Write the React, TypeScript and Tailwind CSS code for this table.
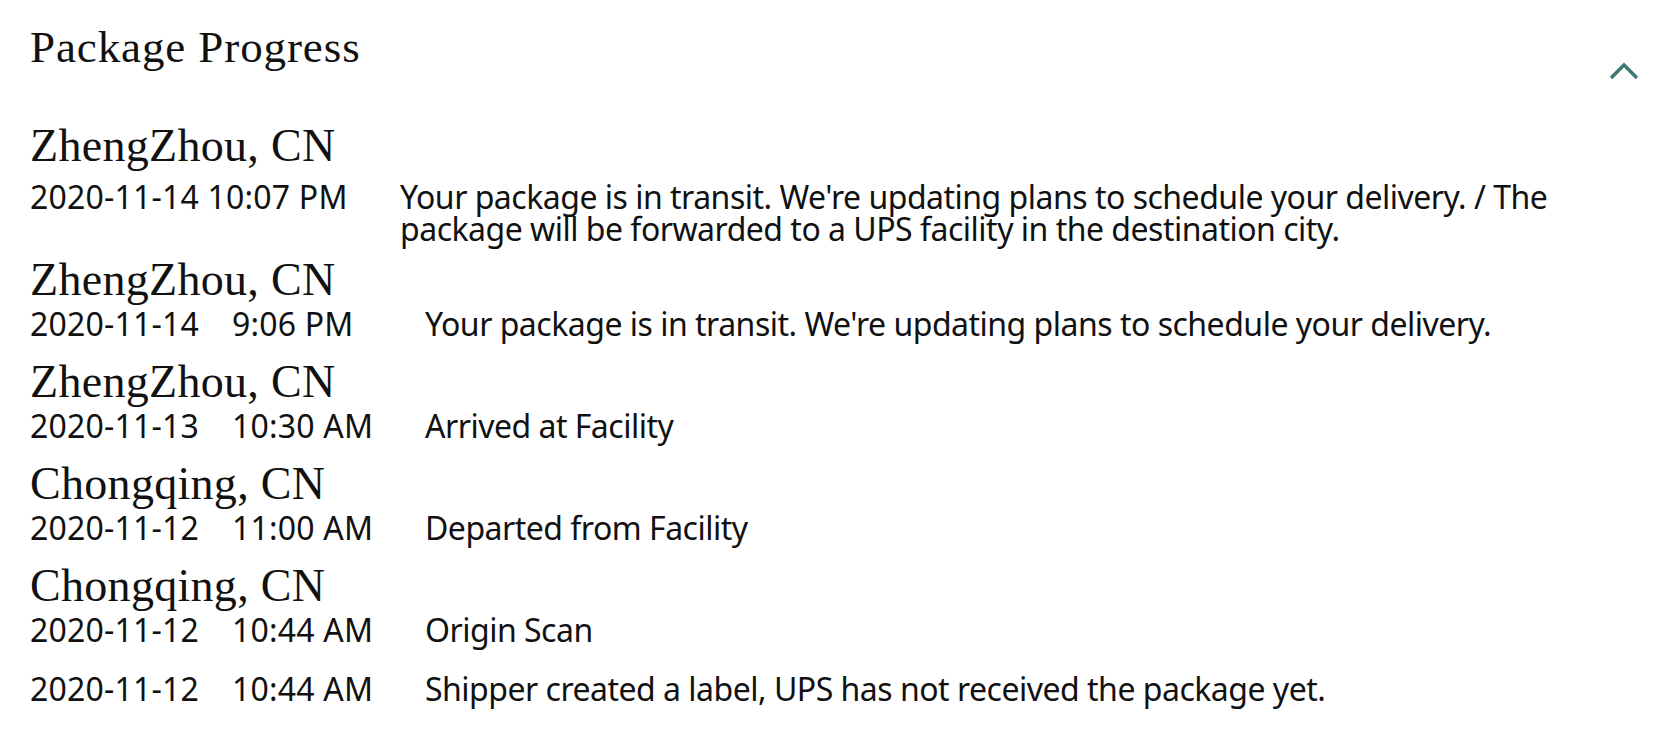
import React from "react";

type Row = { date: string; time: string; desc: string };
type Block = { city?: string; rows: Row[] };

const blocks: Block[] = [
  {
    city: "ZhengZhou, CN",
    rows: [
      { date: "2020-11-14", time: "9:06 PM", desc: "Your package is in transit. We're updating plans to schedule your delivery." },
    ],
  },
  {
    city: "ZhengZhou, CN",
    rows: [{ date: "2020-11-13", time: "10:30 AM", desc: "Arrived at Facility" }],
  },
  {
    city: "Chongqing, CN",
    rows: [{ date: "2020-11-12", time: "11:00 AM", desc: "Departed from Facility" }],
  },
  {
    city: "Chongqing, CN",
    rows: [{ date: "2020-11-12", time: "10:44 AM", desc: "Origin Scan" }],
  },
];

const serif = "font-['Liberation_Serif',serif]";
const sans = "font-['Noto_Sans',sans-serif] font-normal";

function City({ name, className }: { name: string; className: string }) {
  return (
    <div className={`${serif} text-[46px] leading-[44px] tracking-[0.3px] text-[#111] ${className}`}>{name}</div>
  );
}

function EventRow({ row, className }: { row: Row; className: string }) {
  return (
    <div className={`flex ${sans} text-[32px] leading-[32px] text-[#111] ${className}`}>
      <div className="w-[202px] shrink-0 tracking-[0.2px]">{row.date}</div>
      <div className="w-[193px] shrink-0 tracking-[0.2px]">{row.time}</div>
      <div className="tracking-[-0.5px]">{row.desc}</div>
    </div>
  );
}

export default function App() {
  return (
    <div className="w-[1668px] h-[743px] bg-white overflow-hidden pl-[30px] pt-[21px]">
      <div className="flex justify-between items-start">
        <h1 className={`${serif} text-[45px] leading-[52px] tracking-[0.9px] text-[#111] font-normal`}>
          Package Progress
        </h1>
        <svg className="mt-[41px] mr-[29px]" width="30" height="18" viewBox="0 0 30 18" fill="none">
          <path d="M2 16 L15 3 L28 16" stroke="#3a7a72" strokeWidth="3.5" />
        </svg>
      </div>

      <City name="ZhengZhou, CN" className="mt-[44px]" />
      <div className={`flex ${sans} text-[32px] leading-[32px] text-[#111] mt-[13px]`}>
        <div className="w-[370px] shrink-0 tracking-[0.2px]">2020-11-14 10:07 PM</div>
        <div className="tracking-[-0.5px] pr-[40px]">
          Your package is in transit. We're updating plans to schedule your delivery. / The package will be
          forwarded to a UPS facility in the destination city.
        </div>
      </div>

      {blocks.map((b, i) => (
        <div key={i}>
          <City name={b.city!} className={i === 0 ? "mt-[13px]" : "mt-[20px]"} />
          {b.rows.map((r, j) => (
            <EventRow key={j} row={r} className="mt-[6px]" />
          ))}
        </div>
      ))}

      <EventRow
        row={{ date: "2020-11-12", time: "10:44 AM", desc: "Shipper created a label, UPS has not received the package yet." }}
        className="mt-[27px]"
      />
    </div>
  );
}
